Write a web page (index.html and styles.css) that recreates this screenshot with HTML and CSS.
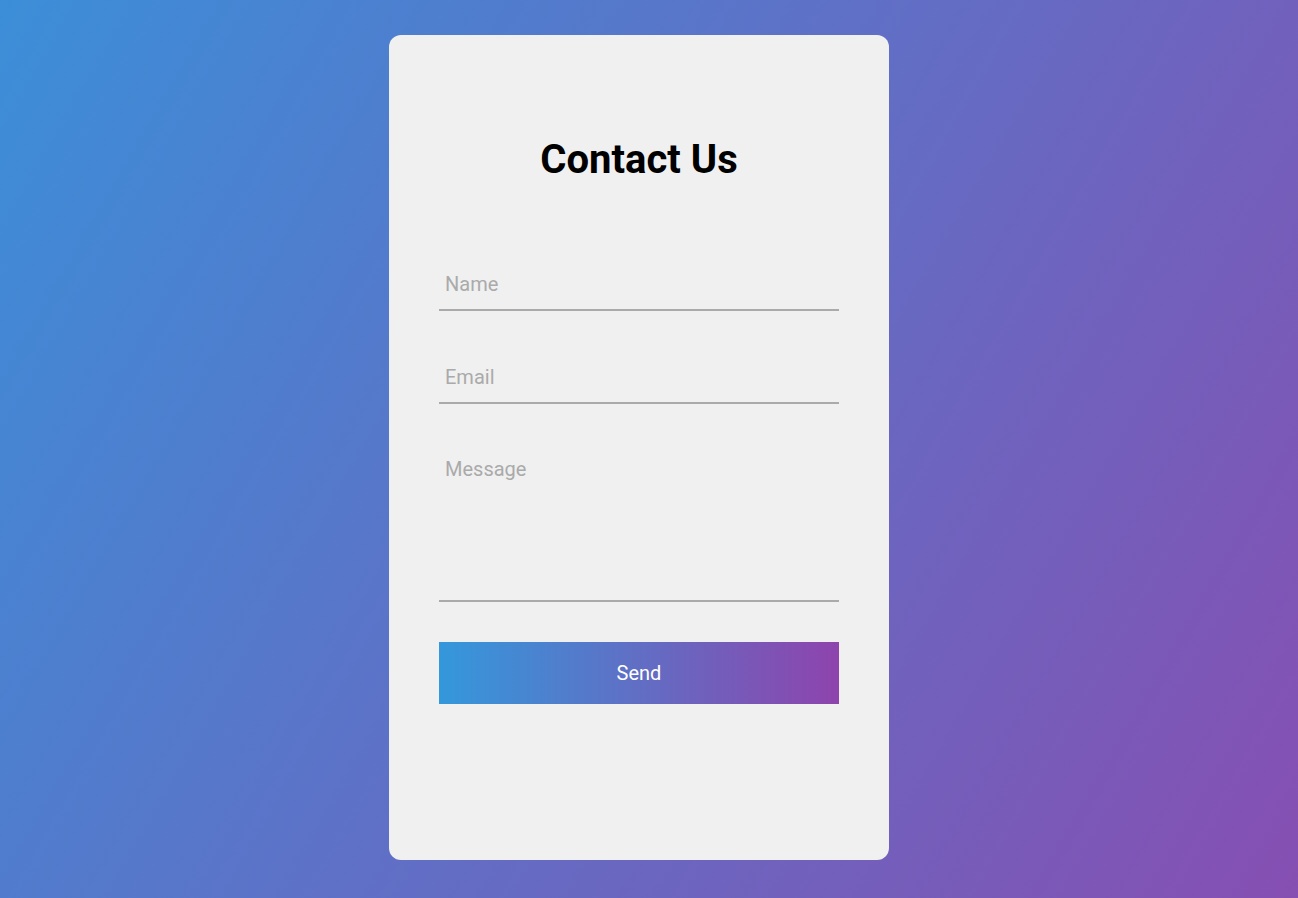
FILE: index.html
```html
<!DOCTYPE html>
<html lang="en">
<head>
<meta charset="utf-8">
<title>Contact Us</title>
<link rel="stylesheet" href="styles.css">
</head>
<body>
<div class="page">
  <div class="card">
    <h2 class="title">Contact Us</h2>
    <form class="form">
      <input class="field" type="text" placeholder="Name">
      <input class="field" type="email" placeholder="Email">
      <textarea class="field message" placeholder="Message"></textarea>
      <button class="send" type="button">Send</button>
    </form>
  </div>
</div>
</body>
</html>
```
FILE: styles.css
```css
html, body {
  margin: 0;
  padding: 0;
  height: 100%;
}
body {
  background: linear-gradient(120deg, #3c8ed8, #864fb2);
  font-family: Roboto, "Liberation Sans", Arial, sans-serif;
  overflow: hidden;
}
.page {
  display: flex;
  justify-content: center;
  align-items: flex-start;
  padding: 35px 20px 0 0;
  box-sizing: border-box;
  min-height: 100%;
}
.card {
  width: 500px;
  height: 825px;
  box-sizing: border-box;
  background: #f0f0f0;
  border-radius: 12px;
  padding: 50px;
}
.title {
  margin: 51px 0 75px;
  font-size: 40px;
  line-height: 47px;
  font-weight: 700;
  text-align: center;
  color: #000;
}
.form {
  display: flex;
  flex-direction: column;
}
.field {
  display: block;
  width: 100%;
  box-sizing: border-box;
  height: 53px;
  margin: 0 0 40px;
  padding: 14px 6px;
  font-family: inherit;
  font-size: 20px;
  line-height: 23px;
  color: #333;
  background: transparent;
  border: none;
  border-bottom: 2px solid #aaa;
  outline: none;
  resize: none;
}
.field::placeholder {
  color: #aaa;
}
.message {
  height: 158px;
}
.send {
  display: block;
  width: 100%;
  height: 62px;
  border: none;
  margin: 0;
  background: linear-gradient(to right, #3498db, #8e44ad);
  color: #fff;
  font-family: inherit;
  font-size: 20px;
  cursor: pointer;
}
```
